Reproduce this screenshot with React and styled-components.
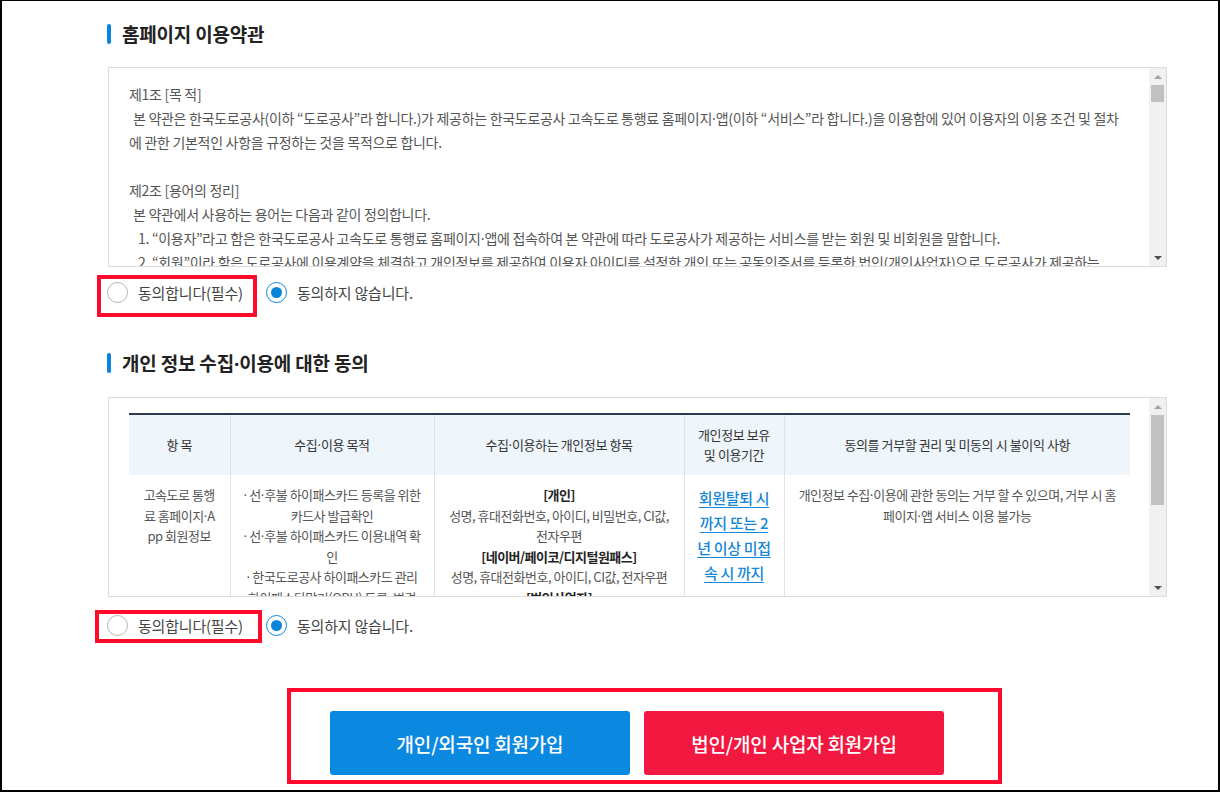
import React from 'react';
import styled, { createGlobalStyle } from 'styled-components';

const Global = createGlobalStyle`
  html, body { margin: 0; padding: 0; background: #fff; }
  body { font-family: "Noto Sans CJK KR", "Noto Sans", sans-serif; }
  * { box-sizing: border-box; }
`;

const Frame = styled.div`
  width: 1220px;
  height: 792px;
  overflow: hidden;
  background: #fff;
  border-style: solid;
  border-color: #000;
  border-width: 1px 2px 2px 2px;
`;

const Content = styled.div`
  width: 1059px;
  margin-left: 106px;
  padding-top: 21px;
`;

const Mid = styled.span`
  font-family: "Noto Sans", "Liberation Sans", sans-serif;
  letter-spacing: 0;
`;

const fmt = (s) =>
  s.split('·').flatMap((part, i) => (i ? [<Mid key={i}>·</Mid>, part] : [part]));

const TitleBar = styled.h2`
  margin: ${p => p.$mt || 0}px 0 0 -1px;
  display: flex;
  align-items: center;
  gap: 11px;
  height: 24px;
  font-size: 19px;
  line-height: 24px;
  font-weight: 700;
  color: #222;
  letter-spacing: -0.2px;
  &::before {
    content: '';
    width: 4px;
    height: 20px;
    border-radius: 2px;
    background: #0a84dc;
  }
`;

const TitleText = styled.span`
  white-space: nowrap;
`;

function Title({ mt, children }) {
  return (
    <TitleBar $mt={mt}>
      <TitleText>{children}</TitleText>
    </TitleBar>
  );
}

const Box = styled.div`
  margin-top: ${p => p.$mt}px;
  height: 200px;
  border: 1px solid #dcdcdc;
  display: flex;
  background: #fff;
`;

const TermsBody = styled.div`
  flex: 1;
  overflow: hidden;
  padding: 14px 20px 0 20px;
  font-size: 14px;
  line-height: 24px;
  color: #555;
  letter-spacing: -0.3px;
  white-space: nowrap;
`;

const Line = styled.div`
  height: 24px;
  padding-left: ${p => p.$indent || 0}px;
`;

const Scrollbar = styled.div`
  width: 17px;
  flex: none;
  background: #f1f1f1;
  display: flex;
  flex-direction: column;
  align-items: center;
`;

const ArrowBtn = styled.div`
  width: 17px;
  height: 17px;
  flex: none;
  display: flex;
  align-items: center;
  justify-content: center;
  &::after {
    content: '';
    width: 0;
    height: 0;
    border-left: 4px solid transparent;
    border-right: 4px solid transparent;
    ${p => p.$down
      ? 'border-top: 4px solid #505050;'
      : 'border-bottom: 4px solid #a3a3a3;'}
  }
`;

const Thumb = styled.div`
  width: 13px;
  flex: none;
  height: ${p => p.$h}px;
  margin-top: ${p => p.$top}px;
  background: #c1c1c1;
`;

const Spacer = styled.div`
  flex: 1;
`;

const RadioRow = styled.div`
  display: flex;
  align-items: flex-start;
  margin-top: ${p => p.$mt}px;
  margin-left: ${p => p.$ml}px;
`;

const Marked = styled.div`
  border: 4px solid #ff0a2a;
  padding: ${p => p.$pad};
  display: flex;
`;

const Option = styled.label`
  display: flex;
  align-items: center;
  gap: 10px;
  margin-left: ${p => p.$ml || 0}px;
  margin-top: ${p => p.$mt || 0}px;
  font-size: 15px;
  line-height: 21px;
  color: #444;
  letter-spacing: -0.2px;
  white-space: nowrap;
`;

const Circle = styled.span`
  width: 21px;
  height: 21px;
  border-radius: 50%;
  flex: none;
  background: #fff;
  border: 1px solid ${p => (p.$on ? '#0a84d8' : '#b4b4b4')};
  display: flex;
  align-items: center;
  justify-content: center;
  &::after {
    content: '';
    display: ${p => (p.$on ? 'block' : 'none')};
    width: 11px;
    height: 11px;
    border-radius: 50%;
    background: #0a84d8;
  }
`;

const TableWrap = styled.div`
  flex: 1;
  overflow: hidden;
  padding: 15px 20px 0 20px;
`;

const Table = styled.table`
  width: 1001px;
  border-collapse: collapse;
  table-layout: fixed;
  border-top: 2px solid #2b3a55;
`;

const Th = styled.th`
  height: 61px;
  background: #eef5fb;
  font-size: 13px;
  line-height: 20px;
  font-weight: 400;
  color: #333;
  text-align: center;
  letter-spacing: -0.4px;
  border-left: ${p => (p.$first ? 'none' : '1px solid #dde3ea')};
  padding: 0 6px;
`;

const Td = styled.td`
  vertical-align: top;
  text-align: center;
  padding: 10px 4px;
  font-size: 13px;
  line-height: 20.5px;
  color: #555;
  letter-spacing: -0.5px;
  white-space: nowrap;
  border-left: ${p => (p.$first ? 'none' : '1px solid #e2e2e2')};
`;

const Strong = styled.span`
  font-weight: 700;
  color: #222;
`;

const LinkText = styled.a`
  display: block;
  font-size: 15px;
  line-height: 25px;
  font-weight: 500;
  color: #1787d6;
  text-decoration: underline;
  text-underline-offset: 3px;
  letter-spacing: -0.3px;
`;

const ButtonArea = styled.div`
  margin-top: 45px;
  margin-left: 179px;
  width: 715px;
  height: 96px;
  border: 4px solid #ff0a2a;
  padding: 19px 0 0 39px;
  display: flex;
  gap: 14px;
`;

const Button = styled.button`
  width: 300px;
  height: 64px;
  border: none;
  border-radius: 3px;
  background: ${p => p.$bg};
  color: #fff;
  font-family: inherit;
  font-size: 19px;
  font-weight: 500;
  letter-spacing: -0.2px;
  cursor: pointer;
`;

function FakeScroll({ top, h }) {
  return (
    <Scrollbar>
      <ArrowBtn />
      <Thumb $top={top} $h={h} />
      <Spacer />
      <ArrowBtn $down />
    </Scrollbar>
  );
}

export default function App() {
  return (
    <>
      <Global />
      <Frame>
        <Content>
          <Title>홈페이지 이용약관</Title>
          <Box $mt={21}>
            <TermsBody>
              <Line>제1조 [목 적]</Line>
              <Line $indent={4}>{fmt('본 약관은 한국도로공사(이하 “도로공사”라 합니다.)가 제공하는 한국도로공사 고속도로 통행료 홈페이지·앱(이하 “서비스”라 합니다.)을 이용함에 있어 이용자의 이용 조건 및 절차')}</Line>
              <Line>에 관한 기본적인 사항을 규정하는 것을 목적으로 합니다.</Line>
              <Line />
              <Line>제2조 [용어의 정리]</Line>
              <Line $indent={4}>본 약관에서 사용하는 용어는 다음과 같이 정의합니다.</Line>
              <Line $indent={9}>{fmt('1. “이용자”라고 함은 한국도로공사 고속도로 통행료 홈페이지·앱에 접속하여 본 약관에 따라 도로공사가 제공하는 서비스를 받는 회원 및 비회원을 말합니다.')}</Line>
              <Line $indent={9}>2. “회원”이라 함은 도로공사에 이용계약을 체결하고 개인정보를 제공하여 이용자 아이디를 설정한 개인 또는 공동인증서를 등록한 법인(개인사업자)으로 도로공사가 제공하는</Line>
              <Line $indent={9}>서비스를 이용할 수 있는 자를 말합니다.</Line>
            </TermsBody>
            <FakeScroll top={0} h={17} />
          </Box>

          <RadioRow $mt={8} $ml={-11}>
            <Marked $pad="3px 10px 10px 6px">
              <Option>
                <Circle />
                동의합니다(필수)
              </Option>
            </Marked>
            <Option $ml={9} $mt={7}>
              <Circle $on />
              동의하지 않습니다.
            </Option>
          </RadioRow>

          <Title mt={34}>{fmt('개인 정보 수집·이용에 대한 동의')}</Title>
          <Box $mt={22}>
            <TableWrap>
              <Table>
                <colgroup>
                  <col style={{ width: 101 }} />
                  <col style={{ width: 204 }} />
                  <col style={{ width: 250 }} />
                  <col style={{ width: 100 }} />
                  <col style={{ width: 346 }} />
                </colgroup>
                <thead>
                  <tr>
                    <Th $first>항 목</Th>
                    <Th>{fmt('수집·이용 목적')}</Th>
                    <Th>{fmt('수집·이용하는 개인정보 항목')}</Th>
                    <Th>개인정보 보유<br />및 이용기간</Th>
                    <Th>동의를 거부할 권리 및 미동의 시 불이익 사항</Th>
                  </tr>
                </thead>
                <tbody>
                  <tr>
                    <Td $first>고속도로 통행<br />{fmt('료 홈페이지·A')}<br />pp 회원정보</Td>
                    <Td>
                      {fmt('· 선·후불 하이패스카드 등록을 위한')}<br />
                      카드사 발급확인<br />
                      {fmt('· 선·후불 하이패스카드 이용내역 확')}<br />
                      인<br />
                      {fmt('· 한국도로공사 하이패스카드 관리')}<br />
                      하이패스단말기(OBU) 등록, 변경<br />
                      {fmt('· 통행료 미납 조회 및 납부')}
                    </Td>
                    <Td>
                      <Strong>[개인]</Strong><br />
                      성명, 휴대전화번호, 아이디, 비밀번호, CI값,<br />
                      전자우편<br />
                      <Strong>[네이버/페이코/디지털원패스]</Strong><br />
                      성명, 휴대전화번호, 아이디, CI값, 전자우편<br />
                      <Strong>[법인사업자]</Strong>
                    </Td>
                    <Td>
                      <LinkText href="#">회원탈퇴 시</LinkText>
                      <LinkText href="#">까지 또는 2</LinkText>
                      <LinkText href="#">년 이상 미접</LinkText>
                      <LinkText href="#">속 시 까지</LinkText>
                    </Td>
                    <Td>
                      {fmt('개인정보 수집·이용에 관한 동의는 거부 할 수 있으며, 거부 시 홈')}<br />
                      {fmt('페이지·앱 서비스 이용 불가능')}
                    </Td>
                  </tr>
                </tbody>
              </Table>
            </TableWrap>
            <FakeScroll top={0} h={90} />
          </Box>

          <RadioRow $mt={13} $ml={-13}>
            <Marked $pad="1px 15px 3px 8px">
              <Option>
                <Circle />
                동의합니다(필수)
              </Option>
            </Marked>
            <Option $ml={4} $mt={5}>
              <Circle $on />
              동의하지 않습니다.
            </Option>
          </RadioRow>

          <ButtonArea>
            <Button $bg="#0b88df">개인/외국인 회원가입</Button>
            <Button $bg="#f2183f">법인/개인 사업자 회원가입</Button>
          </ButtonArea>
        </Content>
      </Frame>
    </>
  );
}
